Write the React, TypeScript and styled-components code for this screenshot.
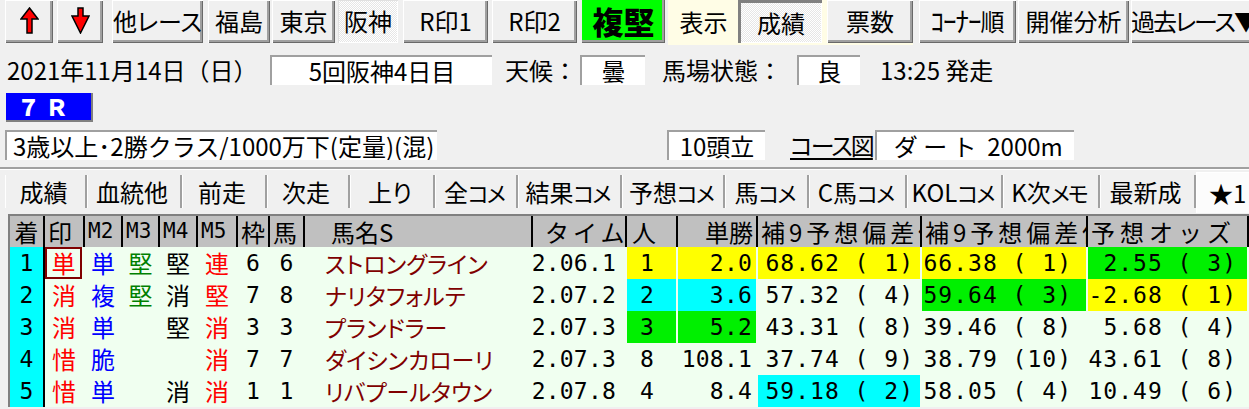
import React from 'react';
import styled, {createGlobalStyle, css} from 'styled-components';

const JP = `"Noto Sans CJK JP", "DejaVu Sans", sans-serif`;
const MONO = `"DejaVu Sans Mono", "Noto Sans CJK JP", monospace`;

const GlobalStyle = createGlobalStyle`
  html, body {
    margin: 0;
    padding: 0;
    background: #f0f0f0;
    overflow: hidden;
  }
  body {
    font-family: ${JP};
    color: #000;
  }
`;

type Tone = 'y' | 'c' | 'g' | '';
const toneColor: Record<Tone, string> = {
  y: '#ffff00',
  c: '#00ffff',
  g: '#00f000',
  '': 'transparent',
};

const Page = styled.div`
  width: 1249px;
  height: 409px;
  overflow: hidden;
  display: flex;
  flex-direction: column;
`;

/* ---------- toolbar ---------- */

const Toolbar = styled.div`
  display: flex;
  height: 45px;
  align-items: flex-start;
`;

type BtnKind = 'raised' | 'checked' | 'pressed' | 'green';

const dither = css`
  background-color: #fff;
  background-image: repeating-conic-gradient(#e6e6e6 0 25%, #fff 0 50%);
  background-size: 2px 2px;
`;

const ToolButton = styled.div<{$w: number; $ml: number; $kind?: BtnKind; $ls?: number}>`
  box-sizing: border-box;
  flex: none;
  width: ${p => p.$w}px;
  margin-left: ${p => p.$ml}px;
  height: 43px;
  display: flex;
  align-items: center;
  justify-content: center;
  padding-bottom: 2px;
  font-size: 24px;
  letter-spacing: ${p => p.$ls ?? 0}px;
  line-height: 1;
  white-space: nowrap;
  overflow: hidden;
  font-feature-settings: 'palt';
  background: #f0f0f0;
  box-shadow: inset 1px 1px 0 #fff, inset -1px -1px 0 #696969,
    inset -3px -3px 0 #a0a0a0;
  ${p =>
    p.$kind === 'checked' &&
    css`
      ${dither};
      box-shadow: inset 1px 1px 0 #e0e0e0, inset -1px -1px 0 #fff;
    `}
  ${p =>
    p.$kind === 'pressed' &&
    css`
      ${dither};
      box-shadow: inset 3px 3px 0 #808080, inset -1px -1px 0 #fff;
      padding: 2px 0 0 2px;
    `}
  ${p =>
    p.$kind === 'green' &&
    css`
      background: #00ff00;
      font-size: 31px;
      font-weight: 900;
      box-shadow: inset -1px -1px 0 #696969, inset -3px -3px 0 #a0a0a0;
    `}
`;

const NarrowKana = styled.span`
  font-size: 27px;
  letter-spacing: -1px;
`;

const ViewPanel = styled.div`
  display: flex;
  align-items: flex-start;
  margin-left: 3px;
  width: 249px;
  height: 45px;
  background: #fffde6;
`;

const PanelLabel = styled.div`
  width: 67px;
  margin-left: 2px;
  height: 43px;
  display: flex;
  align-items: center;
  justify-content: center;
  font-size: 24px;
`;

const ArrowIcon = ({up}: {up: boolean}) => (
  <svg width="19" height="27" viewBox="0 0 19 27">
    <path
      d={
        up
          ? 'M9.5 1 L18 12 L12 12 L12 26 L7 26 L7 12 L1 12 Z'
          : 'M7 1 L12 1 L12 9 L18 9 L9.5 26 L1 9 L7 9 Z'
      }
      fill="#ff0000"
      stroke="#000"
      strokeWidth="1.5"
      strokeLinejoin="miter"
    />
  </svg>
);

/* ---------- race info ---------- */

const InfoRow = styled.div<{$mt: number}>`
  display: flex;
  align-items: center;
  height: 30px;
  margin-top: ${p => p.$mt}px;
  font-size: 24px;
  line-height: 1;
  white-space: pre;
`;

const Label = styled.div<{$w: number; $ml: number}>`
  flex: none;
  width: ${p => p.$w}px;
  margin-left: ${p => p.$ml}px;
`;

const Field = styled.div<{$w: number; $ml: number; $left?: boolean}>`
  box-sizing: border-box;
  flex: none;
  width: ${p => p.$w}px;
  margin-left: ${p => p.$ml}px;
  height: 30px;
  background: #fff;
  border-top: 2px solid #a0a0a0;
  border-left: 2px solid #a0a0a0;
  display: flex;
  align-items: center;
  justify-content: ${p => (p.$left ? 'flex-start' : 'center')};
  padding-left: ${p => (p.$left ? 6 : 0)}px;
  overflow: hidden;
`;

const RaceNo = styled.div`
  box-sizing: border-box;
  margin: 8px 0 0 6px;
  width: 87px;
  height: 29px;
  background: #0000ff;
  color: #fff;
  font-weight: 900;
  font-size: 23px;
  line-height: 27px;
  padding-left: 11px;
  white-space: pre;
  box-shadow: inset -2px -2px 0 #808080;
`;

const CourseLink = styled.div`
  flex: none;
  margin-left: 25px;
  width: 76px;
  font-size: 24px;
  font-feature-settings: 'palt';
  letter-spacing: -2px;
  text-decoration: underline;
  text-decoration-thickness: 2px;
  text-underline-offset: 3px;
`;

const Divider = styled.div`
  margin-top: 7px;
  border-top: 2px solid #a0a0a0;
  border-bottom: 1px solid #fff;
`;

/* ---------- tabs ---------- */

const TabBar = styled.div`
  display: flex;
  align-items: flex-start;
  height: 41px;
  margin-top: 2px;
  padding-left: 5px;
`;

const Tab = styled.div<{$w: number; $active?: boolean}>`
  box-sizing: border-box;
  flex: none;
  width: ${p => p.$w}px;
  height: 33px;
  margin-top: 3px;
  background: #f0f0f0;
  border-left: 1px solid #fff;
  border-right: 2px solid #a0a0a0;
  display: flex;
  align-items: center;
  justify-content: center;
  padding-right: 4px;
  font-size: 24px;
  font-feature-settings: 'palt';
  line-height: 1;
  white-space: nowrap;
  overflow: hidden;
  ${p =>
    p.$active &&
    css`
      height: 41px;
      margin-top: 0;
      background: #fcfcfc;
      border-top: 1px solid #fff;
      border-right: none;
      justify-content: flex-start;
      padding-left: 12px;
    `}
`;

const Kana = styled.span`
  letter-spacing: -2px;
  font-size: 22px;
`;

/* ---------- grid ---------- */

const colWidths = [35, 40, 38, 37, 38, 40, 32, 35, 228, 94, 51, 80, 164, 166, 161];

const Grid = styled.div`
  margin-left: 8px;
  margin-top: 1px;
  border-left: 2px solid #808080;
  border-top: 2px solid #808080;
  background: #f0fff0;
  display: grid;
  grid-template-columns: ${colWidths.map(w => `${w}px`).join(' ')};
  grid-template-rows: 31px repeat(5, 32px);
`;

const Head = styled.div<{$align?: string; $pl?: number; $pr?: number; $ls?: number; $mono?: boolean}>`
  box-sizing: border-box;
  background: #c0c0c0;
  border-right: 2px solid #000;
  display: flex;
  align-items: center;
  justify-content: ${p => p.$align ?? 'flex-start'};
  padding-left: ${p => p.$pl ?? 3}px;
  padding-right: ${p => p.$pr ?? 0}px;
  font-family: ${p => (p.$mono ? MONO : JP)};
  font-size: ${p => (p.$mono ? 21 : 24)}px;
  letter-spacing: ${p => p.$ls ?? 0}px;
  line-height: 1;
  white-space: pre;
  overflow: hidden;
`;

const Cell = styled.div<{
  $tone?: Tone;
  $color?: string;
  $align?: string;
  $pl?: number;
  $pr?: number;
  $ls?: number;
  $mono?: boolean;
  $focus?: boolean;
}>`
  box-sizing: border-box;
  border-right: 2px solid transparent;
  background-clip: padding-box;
  background-color: ${p => toneColor[p.$tone ?? '']};
  color: ${p => p.$color ?? '#000'};
  display: flex;
  align-items: center;
  justify-content: ${p => p.$align ?? 'center'};
  padding-left: ${p => p.$pl ?? 0}px;
  padding-right: ${p => p.$pr ?? 0}px;
  font-family: ${p => (p.$mono ? MONO : JP)};
  font-size: ${p => (p.$mono ? 23 : 24)}px;
  letter-spacing: ${p => p.$ls ?? 0}px;
  line-height: 1;
  white-space: pre;
  overflow: hidden;
  ${p =>
    p.$focus &&
    css`
      box-shadow: inset 0 0 0 2px #800000;
      margin-right: 3px;
      border-right: none;
    `}
`;

const RankCell = styled(Cell)`
  background-color: #00ffff;
  border-right: 2px solid #000;
`;

const NameCell = styled(Cell)`
  color: #800000;
  font-size: 23px;
  font-feature-settings: 'palt';
  justify-content: flex-start;
  padding-left: 20px;
`;

/* ---------- data ---------- */

type Mark = [string, string];
type Val = [string, Tone];

interface Row {
  rank: string;
  marks: Mark[];
  waku: string;
  uma: string;
  name: string;
  time: string;
  pop: Val;
  odds: Val;
  dev1: Val;
  dev2: Val;
  yoso: Val;
}

const R = '#ff0000';
const B = '#0000ff';
const G = '#008000';
const K = '#000000';

const rows: Row[] = [
  {
    rank: '1',
    marks: [['単', R], ['単', B], ['堅', G], ['堅', K], ['連', R]],
    waku: '6', uma: '6', name: 'ストロングライン', time: '2.06.1',
    pop: ['1', 'y'], odds: ['2.0', 'y'],
    dev1: ['68.62 ( 1)', 'y'], dev2: ['66.38 ( 1)', 'y'], yoso: ['2.55 ( 3)', 'g'],
  },
  {
    rank: '2',
    marks: [['消', R], ['複', B], ['堅', G], ['消', K], ['堅', R]],
    waku: '7', uma: '8', name: 'ナリタフォルテ', time: '2.07.2',
    pop: ['2', 'c'], odds: ['3.6', 'c'],
    dev1: ['57.32 ( 4)', ''], dev2: ['59.64 ( 3)', 'g'], yoso: ['-2.68 ( 1)', 'y'],
  },
  {
    rank: '3',
    marks: [['消', R], ['単', B], ['', K], ['堅', K], ['消', R]],
    waku: '3', uma: '3', name: 'プランドラー', time: '2.07.3',
    pop: ['3', 'g'], odds: ['5.2', 'g'],
    dev1: ['43.31 ( 8)', ''], dev2: ['39.46 ( 8)', ''], yoso: ['5.68 ( 4)', ''],
  },
  {
    rank: '4',
    marks: [['惜', R], ['脆', B], ['', K], ['', K], ['消', R]],
    waku: '7', uma: '7', name: 'ダイシンカローリ', time: '2.07.3',
    pop: ['8', ''], odds: ['108.1', ''],
    dev1: ['37.74 ( 9)', ''], dev2: ['38.79 (10)', ''], yoso: ['43.61 ( 8)', ''],
  },
  {
    rank: '5',
    marks: [['惜', R], ['単', B], ['', K], ['消', K], ['消', R]],
    waku: '1', uma: '1', name: 'リバプールタウン', time: '2.07.8',
    pop: ['4', ''], odds: ['8.4', ''],
    dev1: ['59.18 ( 2)', 'c'], dev2: ['58.05 ( 4)', ''], yoso: ['10.49 ( 6)', ''],
  },
];

const tabs: [string, string, number][] = [
  ['成績', '', 82],
  ['血統他', '', 95],
  ['前走', '', 85],
  ['次走', '', 83],
  ['上り', '', 85],
  ['全', 'コメ', 83],
  ['結果', 'コメ', 104],
  ['予想', 'コメ', 103],
  ['馬', 'コメ', 84],
  ['C馬', 'コメ', 98],
  ['KOL', 'コメ', 96],
  ['K次', 'メモ', 97],
  ['最新成', '', 96],
];

export default function App() {
  return (
    <Page>
      <GlobalStyle />
      <Toolbar>
        <ToolButton $w={48} $ml={5}>
          <ArrowIcon up />
        </ToolButton>
        <ToolButton $w={46} $ml={4}>
          <ArrowIcon up={false} />
        </ToolButton>
        <ToolButton $w={91} $ml={9}>他レース</ToolButton>
        <ToolButton $w={62} $ml={5}>福島</ToolButton>
        <ToolButton $w={63} $ml={2}>東京</ToolButton>
        <ToolButton $w={60} $ml={3} $kind="checked">阪神</ToolButton>
        <ToolButton $w={85} $ml={5}>R印1</ToolButton>
        <ToolButton $w={85} $ml={4}>R印2</ToolButton>
        <ToolButton $w={83} $ml={5} $kind="green">複堅</ToolButton>
        <ViewPanel>
          <PanelLabel>表示</PanelLabel>
          <ToolButton $w={84} $ml={1} $kind="pressed">成績</ToolButton>
          <ToolButton $w={86} $ml={5}>票数</ToolButton>
        </ViewPanel>
        <ToolButton $w={97} $ml={6}>
          <NarrowKana>ｺｰﾅｰ</NarrowKana>順
        </ToolButton>
        <ToolButton $w={111} $ml={2}>開催分析</ToolButton>
        <ToolButton $w={125} $ml={2} $ls={-2}>過去レース▼</ToolButton>
      </Toolbar>

      <InfoRow $mt={10}>
        <Label $w={263} $ml={7}>2021年11月14日（日）</Label>
        <Field $w={222} $ml={0}>5回阪神4日目</Field>
        <Label $w={75} $ml={13}>天候：</Label>
        <Field $w={65} $ml={0}>曇</Field>
        <Label $w={135} $ml={17}>馬場状態：</Label>
        <Field $w={63} $ml={0}>良</Field>
        <Label $w={130} $ml={20}>13:25 発走</Label>
      </InfoRow>

      <RaceNo>７ Ｒ</RaceNo>

      <InfoRow $mt={8}>
        <Field $w={432} $ml={5} $left>3歳以上･2勝クラス/1000万下(定量)(混)</Field>
        <Field $w={98} $ml={230}>10頭立</Field>
        <CourseLink>コース図</CourseLink>
        <Field $w={199} $ml={9} $left>{'  ダ ー ト  2000m'}</Field>
      </InfoRow>

      <Divider />

      <TabBar>
        {tabs.map(([label, kana, w]) => (
          <Tab key={label} $w={w}>
            {label}
            {kana && <Kana>{kana}</Kana>}
          </Tab>
        ))}
        <Tab $w={64} $active>
          ★1
        </Tab>
      </TabBar>

      <Grid>
        <Head $align="center" $pl={0}>着</Head>
        <Head>印</Head>
        <Head $mono>M2</Head>
        <Head $mono>M3</Head>
        <Head $mono>M4</Head>
        <Head $mono>M5</Head>
        <Head>枠</Head>
        <Head>馬</Head>
        <Head $pl={26}>馬名S</Head>
        <Head $pl={12} $ls={4}>タイム</Head>
        <Head $pl={5}>人</Head>
        <Head $align="flex-end" $pr={3}>単勝</Head>
        <Head $pl={3} $ls={4}>補9予想偏差値</Head>
        <Head $pl={3} $ls={4}>補9予想偏差値</Head>
        <Head $pl={3} $ls={5}>予想オッズ</Head>

        {rows.map((r, i) => (
          <React.Fragment key={r.rank}>
            <RankCell $mono>{r.rank}</RankCell>
            {r.marks.map(([ch, color], j) => (
              <Cell key={j} $color={color} $focus={i === 0 && j === 0}>
                {ch}
              </Cell>
            ))}
            <Cell $mono>{r.waku}</Cell>
            <Cell $mono>{r.uma}</Cell>
            <NameCell>{r.name}</NameCell>
            <Cell $mono $align="flex-end" $pr={9} $ls={0.2}>{r.time}</Cell>
            <Cell $mono $tone={r.pop[1]} $align="flex-start" $pl={13}>{r.pop[0]}</Cell>
            <Cell $mono $tone={r.odds[1]} $align="flex-end" $pr={4} $ls={0.2}>{r.odds[0]}</Cell>
            <Cell $mono $tone={r.dev1[1]} $align="flex-end" $pr={6} $ls={1}>{r.dev1[0]}</Cell>
            <Cell $mono $tone={r.dev2[1]} $align="flex-end" $pr={14} $ls={1}>{r.dev2[0]}</Cell>
            <Cell $mono $tone={r.yoso[1]} $align="flex-end" $pr={10} $ls={1}>{r.yoso[0]}</Cell>
          </React.Fragment>
        ))}
      </Grid>
    </Page>
  );
}
